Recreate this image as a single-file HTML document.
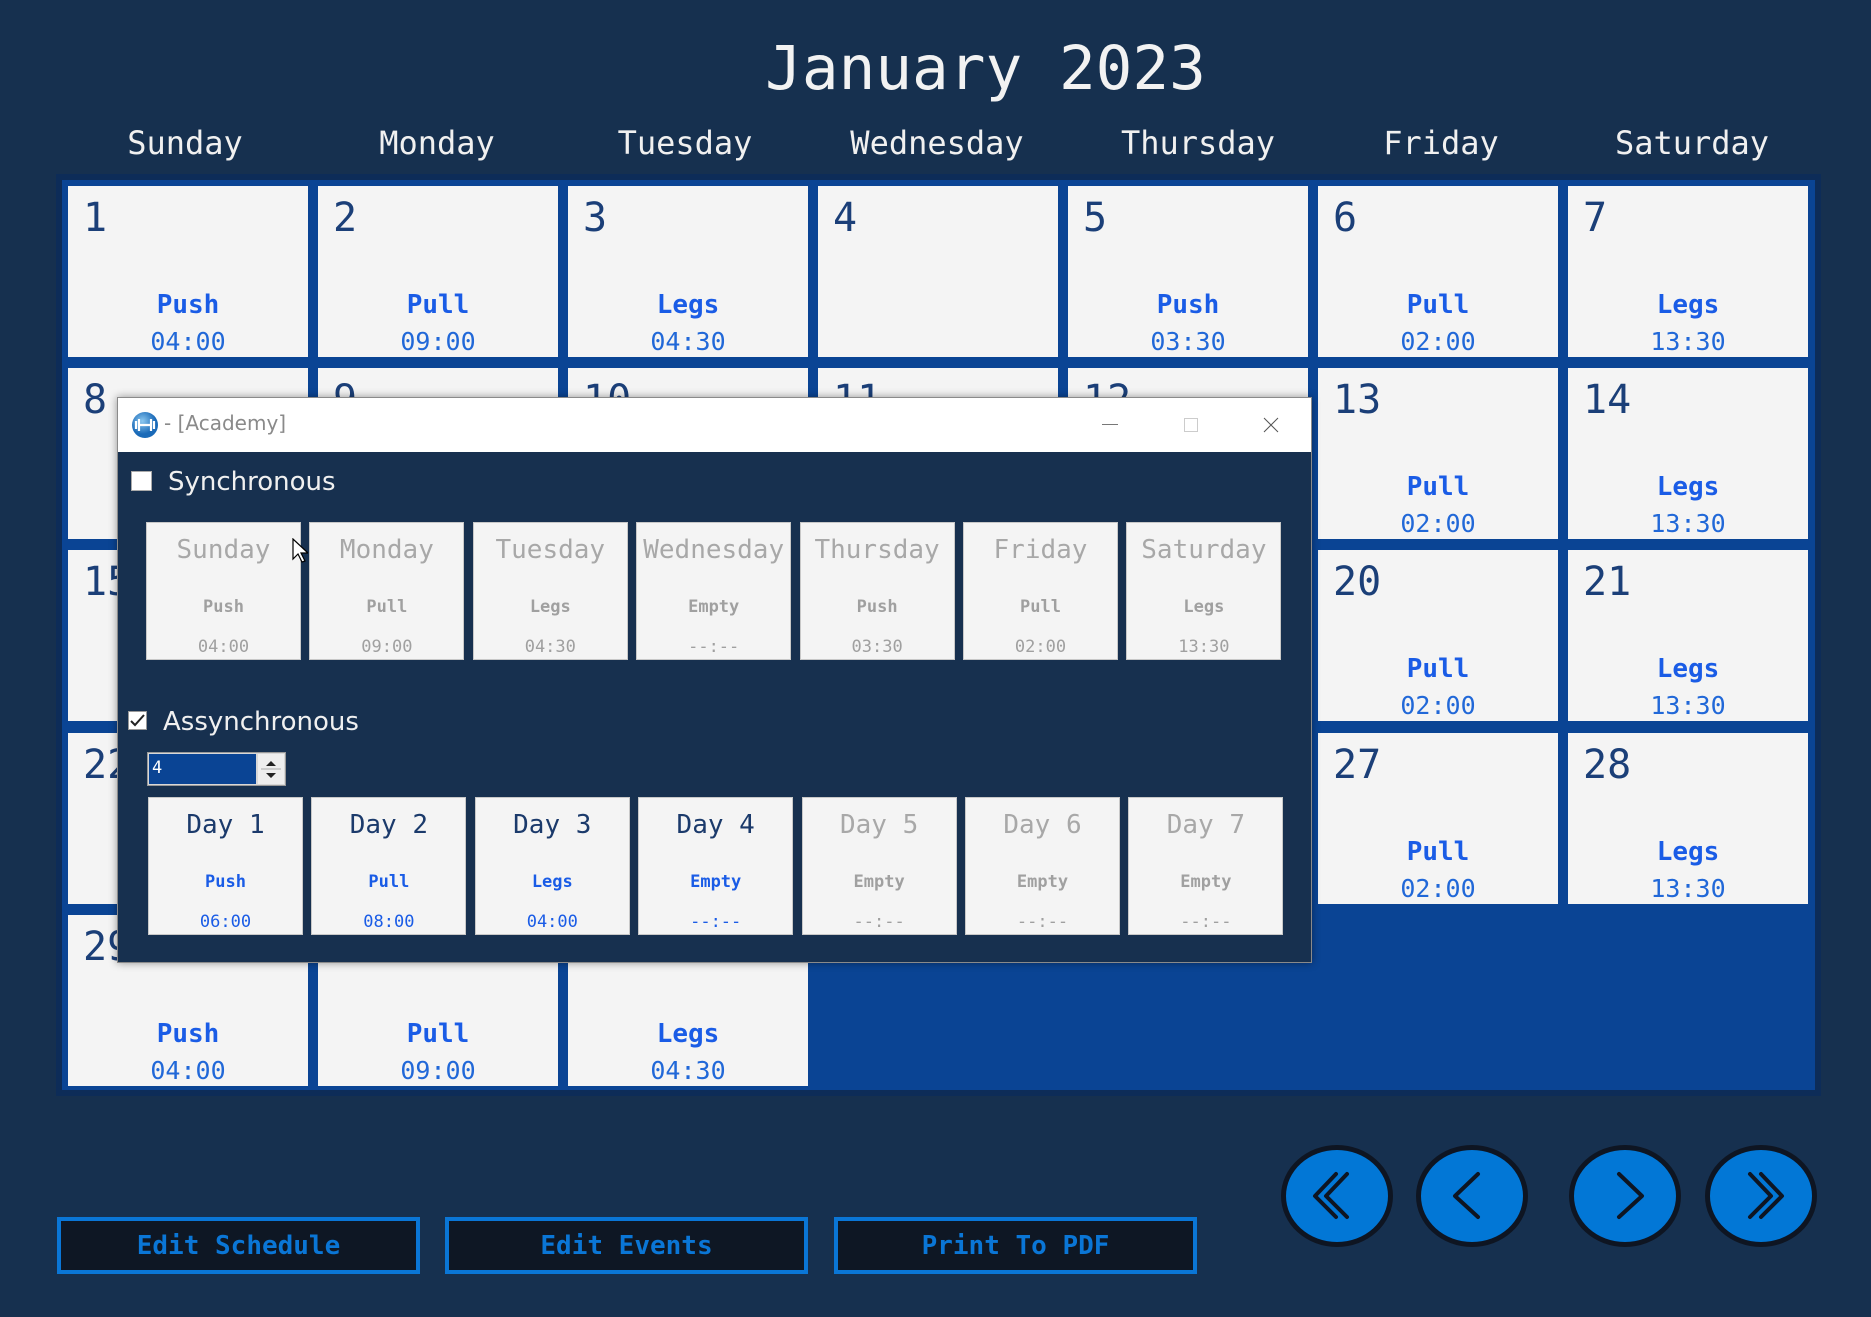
<!DOCTYPE html>
<html><head><meta charset="utf-8"><style>
*{margin:0;padding:0;box-sizing:border-box}
body{width:1871px;height:1317px;background:#16304f;position:relative;overflow:hidden;font-family:"DejaVu Sans Mono","Liberation Mono",monospace}
.abs{position:absolute}
.title{left:0;width:1968px;top:34px;text-align:center;font-size:61px;color:#f2f2f2;line-height:70px}
.dh{top:123px;font-size:32px;color:#f0f0f0;line-height:40px;width:250px;text-align:center}
.grid{left:56px;top:174px;width:1765px;height:922px;background:#0a4494;border:6px solid #0d2c58}
.c{position:absolute;width:240px;height:171px;background:#f4f4f4}
.c .n{position:absolute;left:15px;top:10px;font-size:40px;line-height:44px;color:#1b3f78}
.c .w{position:absolute;left:0;width:240px;text-align:center;top:104px;font-size:26px;font-weight:bold;color:#1a5ce6;line-height:30px}
.c .t{position:absolute;left:0;width:240px;text-align:center;top:141px;font-size:25px;color:#2168d8;line-height:30px}
.dlg{left:117px;top:397px;width:1195px;height:566px;background:#17304f;border:1px solid #8a8a8a;box-shadow:0 0 8px rgba(0,0,0,.4)}
.tb{position:absolute;left:0;top:0;width:100%;height:54px;background:#fff}
.sc{position:absolute;width:155px;height:138px;background:#f4f4f4;border:1px solid #c8c8c8;text-align:center}
.sc .h{position:absolute;left:0;width:100%;top:11px;font-size:26px;line-height:32px;color:#a8a8a8}
.sc .m{position:absolute;left:0;width:100%;top:73px;font-size:17px;font-weight:bold;line-height:22px;color:#a0a0a0}
.sc .tt{position:absolute;left:0;width:100%;top:113px;font-size:17px;line-height:22px;color:#a0a0a0}
.on .h{color:#1b3a6b}.on .m,.on .tt{color:#1a5ce6}
.lbl{font-family:"DejaVu Sans","Liberation Sans",sans-serif;font-size:26px;color:#f0f0f0;line-height:30px}
.btn{top:1217px;width:363px;height:57px;background:#0e1724;border:4px solid #0a76d6;color:#0a76d6;font-weight:bold;font-size:26px;text-align:center;line-height:51px}
.cir{width:112px;height:102px;top:1145px;border-radius:50%;background:#0277d6;border:5px solid #0e1522}
.cir svg{position:absolute;left:0;top:0}
</style></head><body>
<div class="abs title" style="width:1871px;left:50px;">January 2023</div>
<div class="abs dh" style="left:60px">Sunday</div>
<div class="abs dh" style="left:312px">Monday</div>
<div class="abs dh" style="left:560px">Tuesday</div>
<div class="abs dh" style="left:812px">Wednesday</div>
<div class="abs dh" style="left:1073px">Thursday</div>
<div class="abs dh" style="left:1316px">Friday</div>
<div class="abs dh" style="left:1567px">Saturday</div>

<div class="abs grid"></div>
<div id="cells"></div>
<script>
var data=[
["1","Push","04:00"],["2","Pull","09:00"],["3","Legs","04:30"],["4","",""],["5","Push","03:30"],["6","Pull","02:00"],["7","Legs","13:30"],
["8","Push","04:00"],["9","Pull","09:00"],["10","Legs","04:30"],["11","",""],["12","Push","03:30"],["13","Pull","02:00"],["14","Legs","13:30"],
["15","Push","04:00"],["16","Pull","09:00"],["17","Legs","04:30"],["18","",""],["19","Push","03:30"],["20","Pull","02:00"],["21","Legs","13:30"],
["22","Push","04:00"],["23","Pull","09:00"],["24","Legs","04:30"],["25","",""],["26","Push","03:30"],["27","Pull","02:00"],["28","Legs","13:30"],
["29","Push","04:00"],["30","Pull","09:00"],["31","Legs","04:30"]];
var h="";
for(var i=0;i<data.length;i++){var r=Math.floor(i/7),c=i%7;var x=68+c*250,y=186+r*182.2;
h+='<div class="c" style="left:'+x+'px;top:'+y+'px"><div class="n">'+data[i][0]+'</div><div class="w">'+data[i][1]+'</div><div class="t">'+data[i][2]+'</div></div>';}
document.getElementById("cells").innerHTML=h;
</script>

<div class="abs dlg">
 <div class="tb">
  <svg class="abs" style="left:13px;top:13px" width="28" height="28" viewBox="0 0 28 28"><defs><radialGradient id="g" cx="40%" cy="35%"><stop offset="0" stop-color="#8cc8f0"/><stop offset="1" stop-color="#1a6ab8"/></radialGradient></defs><circle cx="14" cy="14" r="13" fill="url(#g)"/><path d="M8 8v12M20 8v12M8 14h12M5 10v8M23 10v8" stroke="#fff" stroke-width="2.2"/></svg>
  <div class="abs" style="left:46px;top:13px;font-family:'DejaVu Sans','Liberation Sans',sans-serif;font-size:20px;color:#8a8a8a">- [Academy]</div>
  <div class="abs" style="left:984px;top:26px;width:16px;height:1px;background:#777"></div>
  <div class="abs" style="left:1066px;top:20px;width:14px;height:14px;border:1px solid #ccc"></div>
  <svg class="abs" style="left:1145px;top:19px" width="16" height="16"><path d="M1 1L15 15M15 1L1 15" stroke="#555" stroke-width="1"/></svg>
 </div>
 <div class="abs" style="left:13px;top:73px;width:21px;height:20px;background:#fff;border:1px solid #aaa"></div>
 <div class="abs lbl" style="left:50px;top:69px">Synchronous</div>
 <div class="abs" style="left:10px;top:313px;width:19px;height:19px;background:#fff;border:1px solid #999"></div>
 <svg class="abs" style="left:10px;top:313px" width="19" height="19"><path d="M3 10l4 4 9-10" stroke="#222" stroke-width="2" fill="none"/></svg>
 <div class="abs lbl" style="left:45px;top:309px">Assynchronous</div>
 <div class="abs" style="left:29px;top:354px;width:139px;height:34px;background:#d8d8d8;border:1px solid #999"></div>
 <div class="abs" style="left:31px;top:356px;width:107px;height:30px;background:#0a4494;color:#fff;font-size:17px;line-height:28px;padding-left:3px">4</div>
 <div class="abs" style="left:140px;top:356px;width:26px;height:30px;background:#eee"></div>
 <svg class="abs" style="left:140px;top:356px" width="26" height="30"><path d="M8 12l5-5 5 5z M8 19l5 5 5-5z" fill="#222"/><path d="M3 15h20" stroke="#aaa"/></svg>
 <div id="sync"></div>
</div>
<script>
var s="";
var sd=[["Sunday","Push","04:00"],["Monday","Pull","09:00"],["Tuesday","Legs","04:30"],["Wednesday","Empty","--:--"],["Thursday","Push","03:30"],["Friday","Pull","02:00"],["Saturday","Legs","13:30"]];
var ad=[["Day 1","Push","06:00"],["Day 2","Pull","08:00"],["Day 3","Legs","04:00"],["Day 4","Empty","--:--"],["Day 5","Empty","--:--"],["Day 6","Empty","--:--"],["Day 7","Empty","--:--"]];
for(var i=0;i<7;i++){var x=145-117+i*163.4;
s+='<div class="sc" style="left:'+x+'px;top:124px"><div class="h">'+sd[i][0]+'</div><div class="m">'+sd[i][1]+'</div><div class="tt">'+sd[i][2]+'</div></div>';
var x2=147-117+i*163.4;
s+='<div class="sc'+(i<4?' on':'')+'" style="left:'+x2+'px;top:399px"><div class="h">'+ad[i][0]+'</div><div class="m">'+ad[i][1]+'</div><div class="tt">'+ad[i][2]+'</div></div>';}
document.getElementById("sync").innerHTML=s;
</script>
<svg class="abs" style="left:292px;top:538px" width="16" height="26"><path d="M1 1v20l5-5 4 8 3-1-4-8h7z" fill="#fff" stroke="#000" stroke-width="1.2"/></svg>

<div class="abs btn" style="left:57px">Edit Schedule</div>
<div class="abs btn" style="left:445px">Edit Events</div>
<div class="abs btn" style="left:834px">Print To PDF</div>

<div class="abs cir" style="left:1281px"><svg width="102" height="92"><path d="M50 24L29 46l21 21M61 24L40 46l21 21" stroke="#0e1522" stroke-width="4" fill="none" stroke-linecap="round" stroke-linejoin="round"/></svg></div>
<div class="abs cir" style="left:1416px"><svg width="102" height="92"><path d="M57 24L34 46l23 21" stroke="#0e1522" stroke-width="4" fill="none" stroke-linecap="round" stroke-linejoin="round"/></svg></div>
<div class="abs cir" style="left:1569px"><svg width="102" height="92"><path d="M45 24L68 46 45 67" stroke="#0e1522" stroke-width="4" fill="none" stroke-linecap="round" stroke-linejoin="round"/></svg></div>
<div class="abs cir" style="left:1705px"><svg width="102" height="92"><path d="M40 24l21 22-21 21M51 24l21 22-21 21" stroke="#0e1522" stroke-width="4" fill="none" stroke-linecap="round" stroke-linejoin="round"/></svg></div>
</body></html>
